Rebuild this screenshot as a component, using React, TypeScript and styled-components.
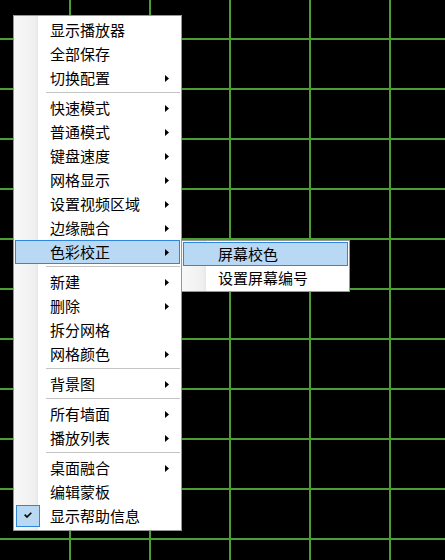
import React from "react";
import styled, { createGlobalStyle } from "styled-components";

const Global = createGlobalStyle`
  html, body, #root { margin: 0; padding: 0; height: 100%; }
  body { background: #000; overflow: hidden; }
`;

const GRID = "#4a9e34";

const Desktop = styled.div`
  position: relative;
  width: 445px;
  height: 560px;
  background-color: #000;
  background-image:
    linear-gradient(to right, transparent 69px, ${GRID} 69px, ${GRID} 71px, transparent 71px),
    linear-gradient(to bottom, transparent 38px, ${GRID} 38px, ${GRID} 40px, transparent 40px);
  background-size: 80px 100%, 100% 50px;
  font-family: "Noto Sans CJK SC", "Microsoft YaHei", sans-serif;
  font-size: 15px;
  color: #000;
`;

const panelBg = `linear-gradient(
    to right,
    #f8f8f8 0px,
    #f0f0f0 20px,
    #e8e8e8 24px,
    #ffffff 24px
  )`;

const MenuPanel = styled.div<{ $left: number; $top: number }>`
  position: absolute;
  left: ${(p) => p.$left}px;
  top: ${(p) => p.$top}px;
  width: 169px;
  box-sizing: border-box;
  border: 1px solid #979797;
  padding: 2px 1px;
  background: ${panelBg};
  display: flex;
  flex-direction: column;
`;

const SubPanel = styled.div`
  position: absolute;
  left: calc(100% + 2px);
  top: -1px;
  width: 169px;
  box-sizing: border-box;
  border: 1px solid #979797;
  padding: 1px;
  background: ${panelBg};
  display: flex;
  flex-direction: column;
  z-index: 2;
`;

const Item = styled.div<{ $active?: boolean }>`
  position: relative;
  height: 24px;
  box-sizing: border-box;
  display: grid;
  grid-template-columns: 1fr auto;
  align-items: center;
  padding: 0 10px 0 35px;
  border: 1px solid ${(p) => (p.$active ? "#2e86de" : "transparent")};
  background: ${(p) => (p.$active ? "#b8d8f4" : "transparent")};
  white-space: nowrap;
`;

const Label = styled.span`
  line-height: 22px;
  margin-left: -1px;
  margin-top: -1px;
`;

const Separator = styled.div`
  height: 6px;
  display: flex;
  align-items: center;
  padding-left: 31px;
  &::after {
    content: "";
    flex: 1;
    height: 1px;
    border-top: 1px solid #c4c4c4;
  }
`;

const CheckBox = styled.div`
  position: absolute;
  left: 0;
  top: 0;
  width: 24px;
  height: 22px;
  box-sizing: border-box;
  border: 1px solid #2e86de;
  background: #b8d8f4;
  display: flex;
  align-items: center;
  justify-content: center;
`;

const Arrow = () => (
  <svg width="4" height="7" viewBox="0 0 4 7" style={{ display: "block" }}>
    <path d="M0 0 L4 3.5 L0 7 Z" fill="#000" />
  </svg>
);

const Check = () => (
  <svg width="8" height="6" viewBox="0 0 8 6" style={{ display: "block", marginTop: -2 }}>
    <path d="M0.7 2.6 L3 5 L7.3 0.7" fill="none" stroke="#000" strokeWidth="1.6" />
  </svg>
);

type Entry =
  | { kind: "sep" }
  | { kind: "item"; label: string; sub?: boolean; active?: boolean; checked?: boolean; children?: string[] };

const entries: Entry[] = [
  { kind: "item", label: "显示播放器" },
  { kind: "item", label: "全部保存" },
  { kind: "item", label: "切换配置", sub: true },
  { kind: "sep" },
  { kind: "item", label: "快速模式", sub: true },
  { kind: "item", label: "普通模式", sub: true },
  { kind: "item", label: "键盘速度", sub: true },
  { kind: "item", label: "网格显示", sub: true },
  { kind: "item", label: "设置视频区域", sub: true },
  { kind: "item", label: "边缘融合", sub: true },
  { kind: "item", label: "色彩校正", sub: true, active: true, children: ["屏幕校色", "设置屏幕编号"] },
  { kind: "sep" },
  { kind: "item", label: "新建", sub: true },
  { kind: "item", label: "删除", sub: true },
  { kind: "item", label: "拆分网格" },
  { kind: "item", label: "网格颜色", sub: true },
  { kind: "sep" },
  { kind: "item", label: "背景图", sub: true },
  { kind: "sep" },
  { kind: "item", label: "所有墙面", sub: true },
  { kind: "item", label: "播放列表", sub: true },
  { kind: "sep" },
  { kind: "item", label: "桌面融合", sub: true },
  { kind: "item", label: "编辑蒙板" },
  { kind: "item", label: "显示帮助信息", checked: true },
];

export default function App() {
  return (
    <>
      <Global />
      <Desktop>
        <MenuPanel $left={13} $top={15}>
          {entries.map((e, i) =>
            e.kind === "sep" ? (
              <Separator key={i} />
            ) : (
              <Item key={i} $active={e.active}>
                {e.checked && (
                  <CheckBox>
                    <Check />
                  </CheckBox>
                )}
                <Label>{e.label}</Label>
                {e.sub ? <Arrow /> : <span />}
                {e.children && (
                  <SubPanel>
                    {e.children.map((c, j) => (
                      <Item key={c} $active={j === 0}>
                        <Label>{c}</Label>
                        <span />
                      </Item>
                    ))}
                  </SubPanel>
                )}
              </Item>
            )
          )}
        </MenuPanel>
      </Desktop>
    </>
  );
}
